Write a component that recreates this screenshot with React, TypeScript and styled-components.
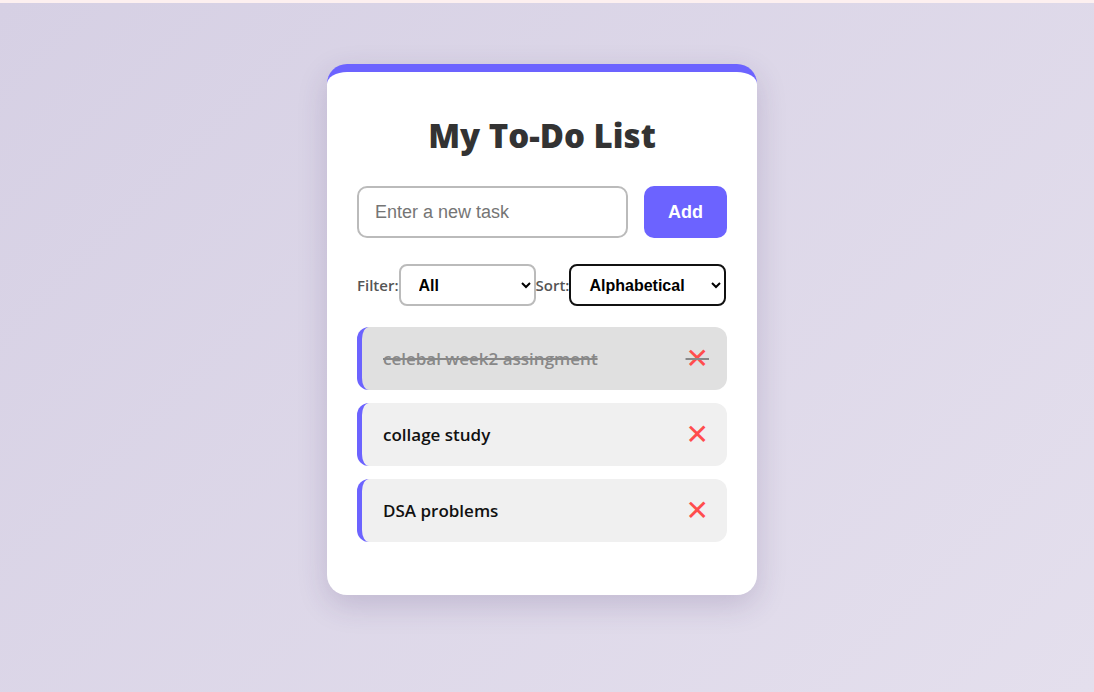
import styled, { createGlobalStyle } from 'styled-components'

const GlobalStyle = createGlobalStyle`
  * { box-sizing: border-box; }
  html, body { margin: 0; padding: 0; }
  body {
    font-family: "Open Sans", "Noto Sans", sans-serif;
    background: #fdf0f0;
  }
`

interface ITask {
  text: string
  done: boolean
}

const tasks: ITask[] = [
  { text: 'celebal week2 assingment', done: true },
  { text: 'collage study', done: false },
  { text: 'DSA problems', done: false },
]

function App() {
  return (
    <>
      <GlobalStyle />
      <Page>
        <Card>
          <Title>My To-Do List</Title>
          <InputRow>
            <TaskInput placeholder="Enter a new task" />
            <AddButton>Add</AddButton>
          </InputRow>
          <Controls>
            <Label>Filter:</Label>
            <Select $width={137} defaultValue="all">
              <option value="all">All</option>
              <option value="active">Active</option>
              <option value="completed">Completed</option>
            </Select>
            <Label>Sort:</Label>
            <Select $width={157} $active defaultValue="alpha">
              <option value="alpha">Alphabetical</option>
              <option value="date">Date</option>
            </Select>
          </Controls>
          <TaskList>
            {tasks.map((t) => (
              <TaskItem key={t.text} $done={t.done}>
                <span>{t.text}</span>
                <DeleteButton>✕</DeleteButton>
              </TaskItem>
            ))}
          </TaskList>
        </Card>
      </Page>
    </>
  )
}

const Page = styled.div`
  margin-top: 3px;
  min-height: 689px;
  background: linear-gradient(135deg, #d6d0e4 0%, #e4dfed 100%);
  display: flex;
  justify-content: center;
  align-items: flex-start;
  padding: 61px 10px 0 0;
`
const Card = styled.div`
  width: 430px;
  background: #fff;
  border-top: 8px solid #6c63ff;
  border-radius: 20px;
  padding: 30px 30px 53px;
  box-shadow: 0 10px 30px rgba(60, 40, 100, 0.18);
`
const Title = styled.h1`
  margin: 12px 0 28px;
  text-align: center;
  font-size: 33px;
  line-height: 44px;
  font-weight: 800;
  color: #333;
`
const InputRow = styled.div`
  display: flex;
  gap: 16px;
  margin-bottom: 26px;
`
const TaskInput = styled.input`
  flex: 1;
  height: 52px;
  border: 2px solid #bbb;
  border-radius: 10px;
  padding: 0 16px;
  font-family: "Liberation Sans", Arial, sans-serif;
  font-size: 18px;
  outline: none;
  &::placeholder { color: #757575; }
`
const AddButton = styled.button`
  width: 83px;
  height: 52px;
  border: none;
  border-radius: 10px;
  background: #6c63ff;
  color: #fff;
  font-family: "Liberation Sans", Arial, sans-serif;
  font-weight: 700;
  font-size: 18px;
`
const Controls = styled.div`
  display: flex;
  align-items: center;
  margin-bottom: 21px;
`
const Label = styled.span`
  font-size: 15px;
  font-weight: 600;
  color: #555;
`
const Select = styled.select<{ $width: number; $active?: boolean }>`
  width: ${(p) => p.$width}px;
  height: 42px;
  border: 2px solid ${(p) => (p.$active ? '#111' : '#bbb')};
  border-radius: 8px;
  padding: 0 8px 0 14px;
  background: #fff;
  color: #000;
  font-family: "Liberation Sans", Arial, sans-serif;
  font-weight: 700;
  font-size: 16px;
`
const TaskList = styled.ul`
  list-style: none;
  margin: 0;
  padding: 0;
  display: flex;
  flex-direction: column;
  gap: 13px;
`
const TaskItem = styled.li<{ $done: boolean }>`
  height: 63px;
  display: flex;
  align-items: center;
  justify-content: space-between;
  padding: 0 18px 0 21px;
  border-left: 5px solid #6c63ff;
  border-radius: 12px;
  background: ${(p) => (p.$done ? '#e0e0e0' : '#f0f0f0')};
  color: ${(p) => (p.$done ? '#888' : '#111')};
  text-decoration: ${(p) => (p.$done ? 'line-through' : 'none')};
  text-decoration-color: #888;
  text-decoration-thickness: 2px;
  font-size: 17px;
  font-weight: 600;
`
const DeleteButton = styled.span`
  color: #ff4d4d;
  font-family: "DejaVu Sans", sans-serif;
  font-size: 28px;
  font-weight: 400;
  line-height: 1;
  cursor: pointer;
`

export default App
